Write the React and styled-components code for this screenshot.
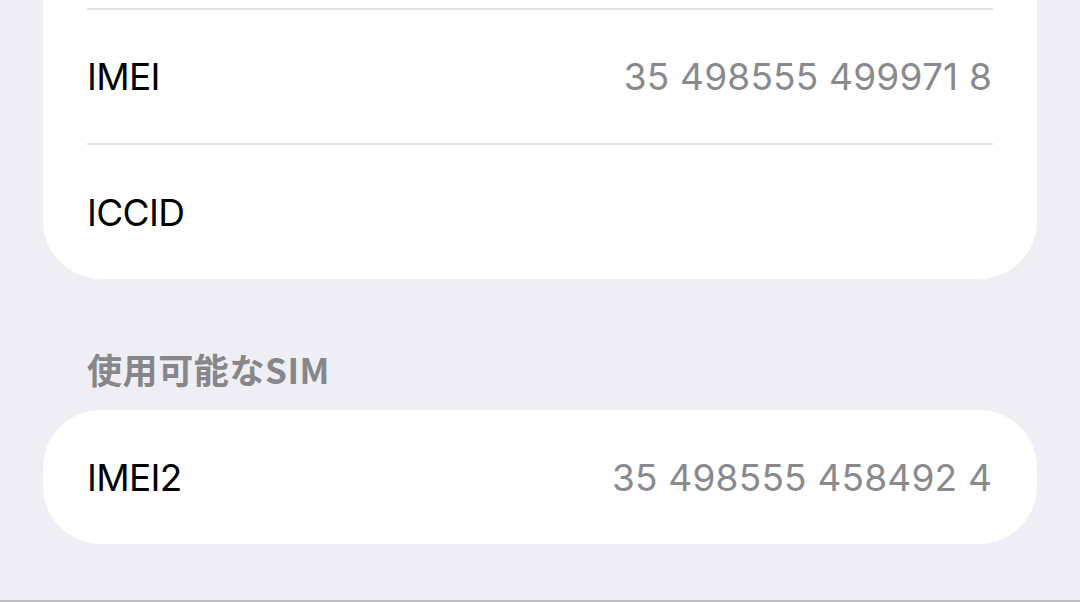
import React from 'react';
import styled, { createGlobalStyle } from 'styled-components';

const GlobalStyle = createGlobalStyle`
  html, body {
    margin: 0;
    padding: 0;
    background: #efeef4;
  }
  * {
    box-sizing: border-box;
  }
`;

const rows = [
  { label: 'IMEI', value: '35 498555 499971 8' },
  { label: 'ICCID', value: '' },
];

const App = () => {
  return (
    <Page>
      <GlobalStyle />
      <Card $cutTop>
        {rows.map((row) => (
          <React.Fragment key={row.label}>
            <Divider />
            <Row $height={row.label === 'IMEI' ? 133 : 134}>
              <Label>{row.label}</Label>
              <Value>{row.value}</Value>
            </Row>
          </React.Fragment>
        ))}
      </Card>

      <SectionHeader>使用可能なSIM</SectionHeader>

      <Card>
        <Row $height={134}>
          <Label>IMEI2</Label>
          <Value>35 498555 458492 4</Value>
        </Row>
      </Card>
    </Page>
  );
};

export default App;

const Page = styled.main`
  height: 602px;
  padding: 0 43px;
  display: flex;
  flex-direction: column;
  background: #efeef4;
  border-bottom: 2px solid #bdbdc1;
  overflow: hidden;
`;

const Card = styled.section`
  background: #ffffff;
  display: flex;
  flex-direction: column;
  padding-top: ${(p) => (p.$cutTop ? '8px' : '0')};
  border-radius: ${(p) => (p.$cutTop ? '0 0 58px 58px' : '58px')};
`;

const Divider = styled.div`
  height: 2px;
  margin: 0 44px;
  background: #e3e3e7;
`;

const Row = styled.div`
  height: ${(p) => p.$height}px;
  padding: 0 45px 0 44px;
  display: flex;
  align-items: center;
  justify-content: space-between;
`;

const Label = styled.span`
  font-family: Inter, 'Liberation Sans', sans-serif;
  font-size: 37px;
  color: #000000;
  letter-spacing: -0.7px;
`;

const Value = styled.span`
  font-family: Inter, 'Liberation Sans', sans-serif;
  font-size: 37px;
  color: #8a8a8e;
  letter-spacing: 0.2px;
`;

const SectionHeader = styled.h2`
  height: 131px;
  margin: 0;
  padding: 71px 0 0 44px;
  font-family: 'Noto Sans CJK JP', sans-serif;
  font-size: 35px;
  line-height: 38px;
  font-weight: 700;
  letter-spacing: 0.6px;
  color: #86868b;
`;
